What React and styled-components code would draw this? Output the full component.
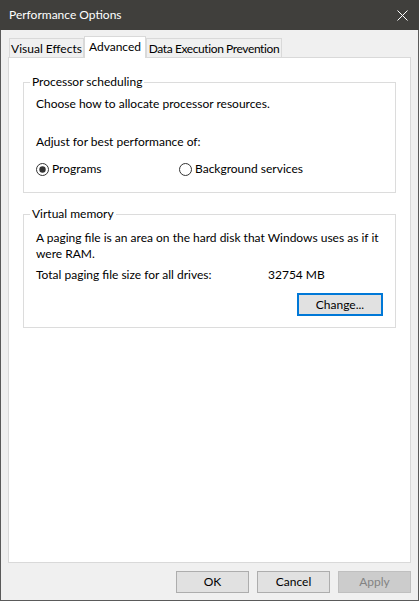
import React from "react";
import styled, { createGlobalStyle } from "styled-components";

const GlobalStyle = createGlobalStyle`
  html, body { margin: 0; padding: 0; background: #f0f0f0; }
  body { font-family: Lato, "Noto Sans", sans-serif; font-size: 12px; color: #000; }
  * { box-sizing: border-box; }
`;

const Window = styled.div`
  width: 419px;
  height: 601px;
  display: flex;
  flex-direction: column;
  overflow: hidden;
`;

const TitleBar = styled.div`
  height: 30px;
  flex: none;
  background: #403f3c;
  color: #ffffff;
  display: flex;
  align-items: center;
  justify-content: space-between;
  padding: 0 11px 0 9px;
  line-height: 16px;
`;

const CloseIcon = styled.svg`
  width: 11px;
  height: 11px;
  display: block;
`;

const Body = styled.div`
  flex: 1;
  display: flex;
  flex-direction: column;
  background: #f0f0f0;
  border: 1px solid #5a5a5a;
  border-top: none;
  padding: 6px 7px 0;
`;

const TabStrip = styled.div`
  height: 21px;
  display: flex;
  align-items: flex-end;
  padding-left: 1px;
`;

const Tab = styled.div`
  width: ${(p) => p.$w}px;
  height: ${(p) => (p.$active ? 22 : 19)}px;
  margin-bottom: ${(p) => (p.$active ? -1 : 0)}px;
  padding-top: 2px;
  border: 1px solid #d9d9d9;
  border-bottom: none;
  background: ${(p) => (p.$active ? "#ffffff" : "#f0f0f0")};
  position: relative;
  z-index: ${(p) => (p.$active ? 1 : 0)};
  text-align: center;
  line-height: 16px;
  white-space: nowrap;
  letter-spacing: ${(p) => p.$ls || 0}px;
`;

const Panel = styled.div`
  height: 506px;
  background: #ffffff;
  border: 1px solid #d9d9d9;
  padding: 16px 14px 0;
  display: flex;
  flex-direction: column;
`;

const Group = styled.fieldset`
  margin: ${(p) => p.$mt || 0}px 0 0;
  padding: 0;
  border: 1px solid #dcdcdc;
  min-width: 0;
`;

const Legend = styled.legend`
  margin-left: 6px;
  padding: 0 2px;
  line-height: 16px;
`;

const GroupContent = styled.div`
  padding: ${(p) => p.$pt}px 12px ${(p) => p.$pb}px;
  display: flex;
  flex-direction: column;
`;

const Text = styled.div`
  line-height: 16px;
  margin-top: ${(p) => p.$mt || 0}px;
`;

const RadioRow = styled.div`
  margin-top: 11px;
  display: grid;
  grid-template-columns: 143px auto;
  line-height: 16px;
`;

const RadioOption = styled.label`
  display: flex;
  align-items: center;
  gap: 3px;
`;

const RadioMark = styled.svg`
  width: 13px;
  height: 13px;
  display: block;
  flex: none;
`;

const InfoRow = styled.div`
  margin-top: 5px;
  display: grid;
  grid-template-columns: 232px auto;
  line-height: 16px;
`;

const ButtonRow = styled.div`
  display: flex;
  justify-content: flex-end;
  gap: 8px;
  margin-top: ${(p) => p.$mt || 0}px;
  padding-top: ${(p) => p.$pt || 0}px;
`;

const Button = styled.div`
  width: ${(p) => p.$w || 73}px;
  height: ${(p) => p.$h || 22}px;
  display: flex;
  align-items: center;
  justify-content: center;
  background: ${(p) => (p.$disabled ? "#cccccc" : "#e1e1e1")};
  border: ${(p) => (p.$focused ? "2px solid #0078d7" : p.$disabled ? "1px solid #bfbfbf" : "1px solid #adadad")};
  color: ${(p) => (p.$disabled ? "#838383" : "#000")};
  line-height: 16px;
`;

function Radio({ checked, children }) {
  return (
    <RadioOption>
      <RadioMark viewBox="0 0 13 13">
        <circle cx="6.5" cy="6.5" r="6" fill="#fff" stroke="#333" strokeWidth="1" />
        {checked && <circle cx="6.5" cy="6.5" r="3.2" fill="#333" />}
      </RadioMark>
      {children}
    </RadioOption>
  );
}

export default function App() {
  return (
    <Window>
      <GlobalStyle />
      <TitleBar>
        <span>Performance Options</span>
        <CloseIcon viewBox="0 0 11 11">
          <path d="M0.5 0.5 L10.5 10.5 M10.5 0.5 L0.5 10.5" stroke="#fff" strokeWidth="1" fill="none" />
        </CloseIcon>
      </TitleBar>
      <Body>
        <TabStrip>
          <Tab $w={75}>Visual Effects</Tab>
          <Tab $w={62} $active>Advanced</Tab>
          <Tab $w={136} $ls={-0.4}>Data Execution Prevention</Tab>
        </TabStrip>
        <Panel>
          <Group>
            <Legend>Processor scheduling</Legend>
            <GroupContent $pt={6} $pb={15}>
              <Text>Choose how to allocate processor resources.</Text>
              <Text $mt={22}>Adjust for best performance of:</Text>
              <RadioRow>
                <Radio checked>Programs</Radio>
                <Radio>Background services</Radio>
              </RadioRow>
            </GroupContent>
          </Group>
          <Group $mt={13}>
            <Legend>Virtual memory</Legend>
            <GroupContent $pt={8} $pb={11}>
              <Text>A paging file is an area on the hard disk that Windows uses as if it were RAM.</Text>
              <InfoRow>
                <span>Total paging file size for all drives:</span>
                <span>32754 MB</span>
              </InfoRow>
              <ButtonRow $mt={10}>
                <Button $w={86} $h={23} $focused>Change...</Button>
              </ButtonRow>
            </GroupContent>
          </Group>
        </Panel>
        <ButtonRow $pt={8}>
          <Button>OK</Button>
          <Button>Cancel</Button>
          <Button $disabled>Apply</Button>
        </ButtonRow>
      </Body>
    </Window>
  );
}
